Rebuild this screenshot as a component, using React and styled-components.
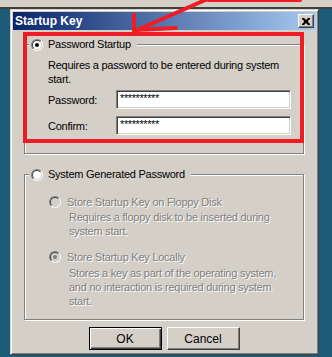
import React from 'react';
import styled, { createGlobalStyle } from 'styled-components';

const Global = createGlobalStyle`
  html, body { margin: 0; padding: 0; }
  body {
    background: #1d5c78;
    overflow: hidden;
    font-family: "Liberation Sans", Arial, sans-serif;
  }
`;

const Page = styled.div`
  position: relative;
  width: 332px;
  height: 357px;
  overflow: hidden;
  background: #1d5c78;
`;

const BackWindow = styled.div`
  height: 7px;
  background: #d4d0c8;
  border-bottom: 2px solid #404040;
`;

const Dialog = styled.div`
  margin-left: 10px;
  width: 309px;
  box-sizing: border-box;
  background: #d4d0c8;
  border: 1px solid;
  border-color: #d4d0c8 #404040 #404040 #d4d0c8;
  box-shadow: inset 1px 1px 0 #fff, inset -1px -1px 0 #808080;
  padding: 2px 2px 4px 2px;
  font-size: 11px;
  letter-spacing: -0.25px;
  color: #000;
`;

const TitleBar = styled.div`
  height: 18px;
  display: flex;
  align-items: center;
  justify-content: space-between;
  padding: 0 2px 0 2px;
  background: linear-gradient(to right, #0a246a, #a6caf0);
`;

const Title = styled.span`
  color: #fff;
  font-weight: bold;
  font-size: 12px;
  letter-spacing: 0;
  line-height: 18px;
`;

const CloseButton = styled.div`
  width: 16px;
  height: 14px;
  box-sizing: border-box;
  background: #d4d0c8;
  border: 1px solid;
  border-color: #fff #404040 #404040 #fff;
  box-shadow: inset -1px -1px 0 #808080;
  display: flex;
  align-items: center;
  justify-content: center;
`;

const Body = styled.div`
  padding: 8px 12px 0 11px;
`;

const Group = styled.fieldset`
  margin: 0;
  margin-top: ${p => p.$top || 0}px;
  padding: 0 10px ${p => p.$bottom}px 4px;
  border: 1px solid #808080;
  box-shadow: inset 1px 1px 0 #fff, 1px 1px 0 #fff;
  min-width: 0;
`;

const Legend = styled.legend`
  display: flex;
  align-items: center;
  gap: 5px;
  height: 13px;
  line-height: 13px;
  padding: 0 6px 0 2px;
  background: #d4d0c8;
  color: #000;
`;

const RadioOuter = styled.span`
  flex: none;
  width: 12px;
  height: 12px;
  box-sizing: border-box;
  border-radius: 50%;
  border: 1px solid;
  border-color: #808080 #fff #fff #808080;
  display: flex;
  margin-left: ${p => p.$indent || 0}px;
`;

const RadioInner = styled.span`
  flex: 1;
  border-radius: 50%;
  border: 1px solid;
  border-color: #404040 #d4d0c8 #d4d0c8 #404040;
  background: ${p => (p.$disabled ? '#d4d0c8' : '#fff')};
  display: flex;
  align-items: center;
  justify-content: center;
`;

const Dot = styled.span`
  width: 4px;
  height: 4px;
  border-radius: 50%;
  background: ${p => (p.$disabled ? '#808080' : '#000')};
`;

const Radio = ({ checked, disabled, indent }) => (
  <RadioOuter $indent={indent}>
    <RadioInner $disabled={disabled}>{checked && <Dot $disabled={disabled} />}</RadioInner>
  </RadioOuter>
);

const Content = styled.div`
  padding-left: 19px;
  padding-top: ${p => p.$top}px;
`;

const Text = styled.div`
  line-height: 14px;
  color: ${p => (p.$disabled ? '#808080' : '#000')};
  text-shadow: ${p => (p.$disabled ? '1px 1px 0 #fff' : 'none')};
  padding-left: ${p => p.$indent || 0}px;
  margin-top: ${p => p.$top || 0}px;
  max-width: ${p => (p.$max ? `${p.$max}px` : 'none')};
`;

const FieldRow = styled.div`
  display: flex;
  align-items: center;
  margin-top: ${p => p.$top}px;
`;

const Label = styled.span`
  width: 68px;
  flex: none;
`;

const PasswordBox = styled.div`
  width: 175px;
  height: 19px;
  box-sizing: border-box;
  background: #fff;
  border: 1px solid;
  border-color: #808080 #fff #fff #808080;
  box-shadow: inset 1px 1px 0 #404040, inset -1px -1px 0 #d4d0c8;
  padding: 1px 0 0 3px;
  line-height: 13px;
  font-size: 11px;
  letter-spacing: -0.4px;
`;

const Option = styled.div`
  display: flex;
  align-items: center;
  gap: 6px;
  height: 14px;
  margin-top: ${p => p.$top}px;
`;

const OptionLabel = styled.span`
  color: #808080;
  text-shadow: 1px 1px 0 #fff;
  line-height: 14px;
`;

const Buttons = styled.div`
  display: flex;
  justify-content: center;
  gap: 5px;
  margin-top: 7px;
`;

const Button = styled.div`
  width: 73px;
  height: 23px;
  box-sizing: border-box;
  display: flex;
  align-items: center;
  justify-content: center;
  background: #d4d0c8;
  letter-spacing: 0;
  border: 1px solid;
  border-color: ${p => (p.$default ? '#000' : '#fff #404040 #404040 #fff')};
  box-shadow: ${p =>
    p.$default
      ? 'inset 1px 1px 0 #fff, inset -1px -1px 0 #404040, inset -2px -2px 0 #808080'
      : 'inset -1px -1px 0 #808080'};
  font-size: 12px;
`;

const Annotation = styled.svg`
  position: absolute;
  left: 0;
  top: 0;
  pointer-events: none;
`;

export default function App() {
  return (
    <Page>
      <Global />
      <BackWindow />
      <Dialog>
        <TitleBar>
          <Title>Startup Key</Title>
          <CloseButton>
            <svg width="8" height="7" viewBox="0 0 8 7">
              <path d="M0 0h2l2 2 2-2h2v1L6 3v1l2 2v1H6L4 5 2 7H0V6l2-2V3L0 1z" fill="#000" />
            </svg>
          </CloseButton>
        </TitleBar>
        <Body>
          <Group $bottom={18}>
            <Legend>
              <Radio checked />
              <span>Password Startup</span>
            </Legend>
            <Content $top={7}>
              <Text>Requires a password to be entered during system start.</Text>
              <FieldRow $top={4}>
                <Label>Password:</Label>
                <PasswordBox>**********</PasswordBox>
              </FieldRow>
              <FieldRow $top={7}>
                <Label>Confirm:</Label>
                <PasswordBox>**********</PasswordBox>
              </FieldRow>
            </Content>
          </Group>
          <Group $top={14} $bottom={11}>
            <Legend>
              <Radio />
              <span>System Generated Password</span>
            </Legend>
            <Content $top={14}>
              <Option $top={0}>
                <Radio disabled indent={1} />
                <OptionLabel>Store Startup Key on Floppy Disk</OptionLabel>
              </Option>
              <Text $disabled $indent={21} $top={1} $max={238}>
                Requires a floppy disk to be inserted during system start.
              </Text>
              <Option $top={12}>
                <Radio disabled checked indent={1} />
                <OptionLabel>Store Startup Key Locally</OptionLabel>
              </Option>
              <Text $disabled $indent={21} $top={2} $max={238}>
                Stores a key as part of the operating system, and no interaction is required during system start.
              </Text>
            </Content>
          </Group>
          <Buttons>
            <Button $default>OK</Button>
            <Button>Cancel</Button>
          </Buttons>
        </Body>
      </Dialog>
      <Annotation width="332" height="357" viewBox="0 0 332 357">
        <g stroke="#ee1c25" strokeWidth="4" fill="none" strokeLinecap="round">
          <rect x="25" y="34" width="277" height="107" strokeLinecap="butt" />
          <line x1="212" y1="-3" x2="135" y2="31" />
          <line x1="134" y1="31" x2="134" y2="15" />
          <line x1="135" y1="30" x2="176" y2="28" />
          <line x1="208" y1="0" x2="300" y2="0" />
        </g>
      </Annotation>
    </Page>
  );
}
